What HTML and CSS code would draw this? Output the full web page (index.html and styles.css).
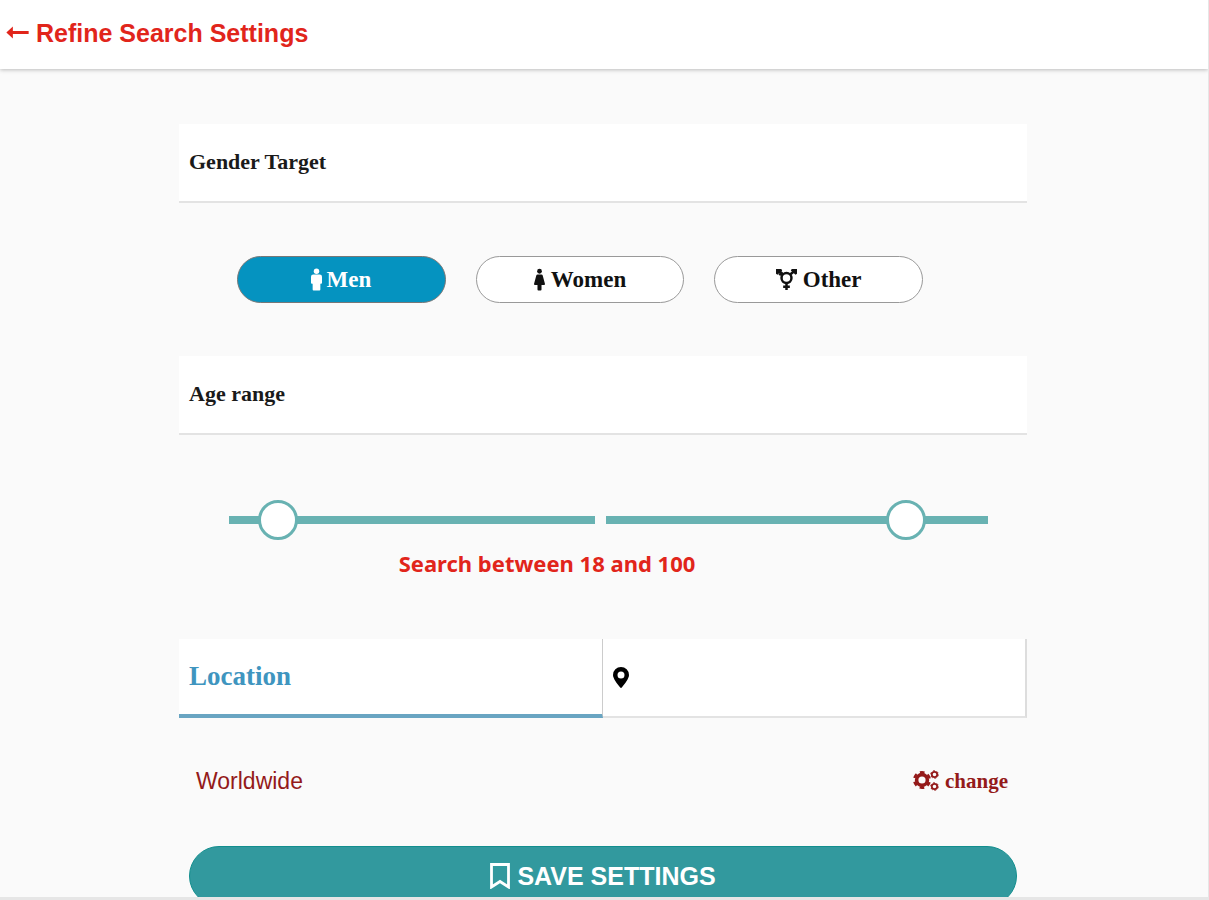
FILE: index.html
```html
<!DOCTYPE html>
<html lang="en">
<head>
    <meta charset="UTF-8">
    <meta name="viewport" content="width=device-width, initial-scale=1.0">
    <title>Refine Search Settings</title>
    <link rel="stylesheet" href="styles.css">
</head>
<body>
    <header class="topbar">
        <a href="#" class="back">
            <svg class="icon-back" viewBox="0 0 24 14" aria-hidden="true"><path d="M0 7 7 .5v4.800h17v3.400H7v4.800z"/></svg>
            <h1>Refine Search Settings</h1>
        </a>
    </header>

    <main class="content">
        <form class="settings" action="" method="post">
            <h2 class="section-title">Gender Target</h2>
            <div class="genders">
                <button type="button" class="gender active" aria-pressed="true">
                    <svg class="icon-person" viewBox="0 0 12 24" aria-hidden="true"><circle cx="6" cy="3" r="3"/><path d="M2.500 6.500h7A2.500 2.500 0 0 1 12 9v6.500a1 1 0 0 1-1 1h-.800V23a1 1 0 0 1-1 1H2.800a1 1 0 0 1-1-1v-6.500H1a1 1 0 0 1-1-1V9a2.500 2.500 0 0 1 2.500-2.500z"/></svg>
                    Men
                </button>
                <button type="button" class="gender" aria-pressed="false">
                    <svg class="icon-person" viewBox="0 0 12 24" aria-hidden="true"><circle cx="6" cy="3" r="2.600"/><path d="M4 6.500h4a1.500 1.500 0 0 1 1.500 1.200L12 17a1 1 0 0 1-1 1H8.200v5a1 1 0 0 1-1 1H4.800a1 1 0 0 1-1-1v-5H1a1 1 0 0 1-1-1l2.500-9.300A1.500 1.500 0 0 1 4 6.500z"/></svg>
                    Women
                </button>
                <button type="button" class="gender" aria-pressed="false">
                    <svg class="icon-other" viewBox="0 0 22 24" aria-hidden="true">
                        <g fill="none" stroke="currentColor" stroke-width="2.600"><circle cx="11" cy="10.500" r="5.200"/><path d="M2 2.500l5.500 4.500M20 2.500l-5.500 4.500M11 15.500V23M7.500 19.500h7M3.500 7.500l3-3.500"/></g>
                        <path d="M0 1h5.500l1 1.500L1.500 7 0 6zM22 1h-5.500l-1 1.500L20.500 7 22 6z"/>
                    </svg>
                    Other
                </button>
            </div>

            <h2 class="section-title">Age range</h2>
            <div class="ranges">
                <input type="range" class="age-min" aria-label="Minimum age" min="10" max="100" value="18">
                <input type="range" class="age-max" aria-label="Maximum age" min="10" max="120" value="100">
            </div>
            <p class="summary">Search between <span id="from">18</span> and <span id="to">100</span></p>

            <div class="location">
                <h2 class="location-title">Location</h2>
                <div class="location-pin">
                    <svg class="icon-pin" viewBox="0 0 16 21" aria-hidden="true"><path fill-rule="evenodd" d="M8 0a8 8 0 0 1 8 8c0 3.500-4 8.500-7 12.300a1.300 1.300 0 0 1-2 0C4 16.500 0 11.500 0 8a8 8 0 0 1 8-8zm0 4.500a3.500 3.500 0 1 0 0 7 3.500 3.500 0 0 0 0-7z"/></svg>
                </div>
            </div>
            <div class="place">
                <span class="place-name">Worldwide</span>
                <a href="#" class="change">
                    <svg class="icon-cogs" viewBox="0 0 26 22" aria-hidden="true">
                        <g fill="none" stroke="currentColor">
                            <circle cx="9" cy="10" r="5.400" stroke-width="3.600"/>
                            <circle cx="9" cy="10" r="7.800" stroke-width="2.400" stroke-dasharray="4.500 3.668" stroke-dashoffset="2.250" transform="rotate(30 9 10)"/>
                            <circle cx="21.500" cy="4.500" r="2.700" stroke-width="1.800"/>
                            <circle cx="21.500" cy="4.500" r="3.800" stroke-width="1" stroke-dasharray="2 1.979"/>
                            <circle cx="21.500" cy="16.500" r="2.700" stroke-width="1.800"/>
                            <circle cx="21.500" cy="16.500" r="3.800" stroke-width="1" stroke-dasharray="2 1.979"/>
                        </g>
                    </svg>
                    change
                </a>
            </div>

            <button type="submit" class="save">
                <svg class="icon-save" viewBox="0 0 20 26" aria-hidden="true"><path d="M1.500 1.500h17v22.500L10 18.500 1.500 24z" fill="none" stroke="currentColor" stroke-width="2.800"/></svg>
                SAVE SETTINGS
            </button>
        </form>
    </main>

    <script>
        const minimo = document.querySelector('.age-min');
        const maximo = document.querySelector('.age-max');

        minimo.addEventListener('input', () => {
            document.querySelector('#from').textContent = minimo.value;
        });

        maximo.addEventListener('input', () => {
            document.querySelector('#to').textContent = maximo.value;
        });
    </script>
</body>
</html>
```
FILE: styles.css
```css
* {
    box-sizing: border-box;
}

body {
    display: flex;
    flex-direction: column;
    height: 100vh;
    margin: 0;
    overflow: hidden;
    font-family: "Liberation Serif", "Times New Roman", serif;
    background-color: #fafafa;
    border-right: 1px solid #e6e6e6;
    border-bottom: 3px solid #e6e6e6;
}

svg {
    flex: none;
    fill: currentColor;
}

h1,
h2,
p {
    margin: 0;
}

a {
    text-decoration: none;
}

button {
    font-family: inherit;
    cursor: pointer;
}

.topbar {
    flex: none;
    display: flex;
    align-items: center;
    height: 69px;
    padding: 0 6px 4px;
    background: white;
    box-shadow: 0 1px 4px rgba(0, 0, 0, 0.25);
}

.back {
    display: flex;
    align-items: center;
    gap: 7px;
    color: #e1251b;
}

.back h1 {
    font-family: "Liberation Sans", Arial, sans-serif;
    font-size: 25px;
    line-height: 30px;
}

.icon-back {
    width: 23px;
    height: 13px;
}

.content {
    flex: 1;
    min-height: 0;
    overflow: hidden;
    padding: 55px 2px 0 0;
}

.settings {
    width: 94%;
    max-width: 848px;
    margin: 0 auto;
}

.section-title {
    height: 79px;
    padding: 0 10px;
    font-size: 22px;
    line-height: 76px;
    color: #1a1a1a;
    background: white;
    border-bottom: 2px solid #e3e3e3;
}

.genders {
    display: grid;
    grid-template-columns: repeat(3, 1fr);
    gap: 30px;
    padding: 53px 104px 53px 58px;
}

.gender {
    display: flex;
    align-items: center;
    justify-content: center;
    gap: 6px;
    height: 47px;
    padding: 0;
    font-size: 23px;
    font-weight: bold;
    color: #111;
    background: white;
    border: 1px solid #999;
    border-radius: 24px;
}

.gender.active {
    gap: 4px;
    color: white;
    background: #0593c0;
    border-color: #777;
}

.icon-person {
    width: 11px;
    height: 23px;
}

.icon-other {
    width: 21px;
    height: 23px;
}

.ranges {
    display: grid;
    grid-template-columns: 366fr 382fr;
    gap: 11px;
    padding: 65px 39px 0 50px;
}

.ranges input {
    width: 100%;
    height: 40px;
    margin: 0;
    background: transparent;
    appearance: none;
}

.ranges input::-webkit-slider-runnable-track {
    height: 8px;
    background: #68b2b2;
}

.ranges input::-webkit-slider-thumb {
    width: 40px;
    height: 40px;
    margin-top: -16px;
    background: white;
    border: 3px solid #68b2b2;
    border-radius: 50%;
    appearance: none;
}

.summary {
    padding: 8px 112px 61px 0;
    font-family: "Noto Sans", "Open Sans", sans-serif;
    font-size: 22px;
    font-weight: bold;
    line-height: 30px;
    text-align: center;
    color: #e1251b;
}

.location {
    display: grid;
    grid-template-columns: 1fr 1fr;
    height: 79px;
}

.location-title {
    padding: 0 10px;
    font-size: 27px;
    line-height: 75px;
    color: #3f95bf;
    background: white;
    border-right: 1px solid #ccc;
    border-bottom: 4px solid #69a5c2;
}

.location-pin {
    display: flex;
    align-items: center;
    padding: 0 10px;
    background: white;
    border-right: 2px solid #ddd;
    border-bottom: 2px solid #e3e3e3;
}

.icon-pin {
    width: 16px;
    height: 21px;
}

.place {
    display: flex;
    align-items: center;
    justify-content: space-between;
    padding: 48px 19px 50px 17px;
    line-height: 30px;
    color: #941a1a;
}

.place-name {
    font-family: "Liberation Sans", Arial, sans-serif;
    font-size: 23px;
}

.change {
    display: flex;
    align-items: center;
    gap: 6px;
    font-size: 21px;
    font-weight: bold;
    color: inherit;
}

.icon-cogs {
    width: 26px;
    height: 22px;
}

.save {
    display: flex;
    align-items: center;
    justify-content: center;
    gap: 7px;
    width: calc(100% - 20px);
    height: 60px;
    margin: 0 10px;
    font-family: "Liberation Sans", Arial, sans-serif;
    font-size: 25px;
    font-weight: bold;
    color: white;
    background: #32999e;
    border: 1px solid #128e8e;
    border-radius: 30px;
}

.icon-save {
    width: 20px;
    height: 26px;
}
```
